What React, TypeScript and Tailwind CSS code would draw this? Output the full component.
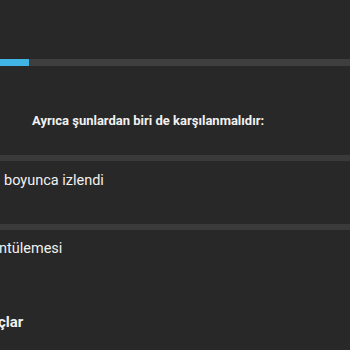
import React from 'react';

const App: React.FC = () => {
  return (
    <div className="w-[350px] h-[350px] overflow-hidden bg-[#282828] text-[#f1f1f1] font-['Roboto','Liberation_Sans',sans-serif]">
      {/* Progress */}
      <div className="pt-[59px]">
        <div className="h-[7px] bg-[#3f3f3f] flex">
          <div className="w-[29px] h-full bg-[#40b4e4]"></div>
        </div>
      </div>

      {/* Extra requirements */}
      <div className="pt-[47px] pl-[32px] h-[89px]">
        <p className="text-[13px] font-bold leading-[16px]">Ayrıca şunlardan biri de karşılanmalıdır:</p>
      </div>

      <div className="h-[6px] bg-[#3a3a3a]"></div>
      <div className="h-[63px] pl-[4px] pt-[10px]">
        <p className="text-[14.5px] leading-[20px]">boyunca izlendi</p>
      </div>

      <div className="h-[6px] bg-[#3a3a3a]"></div>
      <div className="h-[70px] pt-[9px]">
        <p className="text-[14.5px] leading-[20px] ml-[-1px]">ntülemesi</p>
      </div>

      <div className="pt-[12px]">
        <p className="text-[15px] font-bold leading-[20px] ml-[-2px]">çlar</p>
      </div>
    </div>
  );
};

export default App;
